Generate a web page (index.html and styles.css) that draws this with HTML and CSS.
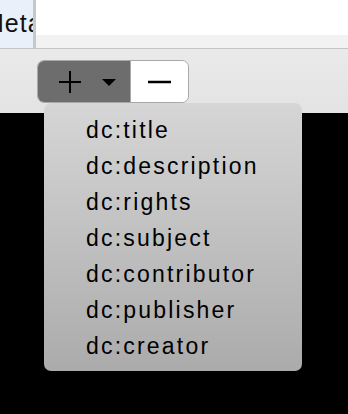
FILE: index.html
```html
<!DOCTYPE html>
<html lang="en">

<head>
    <meta charset="UTF-8" />
    <title>Metadata</title>
    <link rel="stylesheet" href="styles.css">
</head>

<body>

    <!-- table header strip -->
    <div class="table">
        <div class="cell-name"><span class="cell-text">Metadata</span></div>
        <div class="divider"></div>
        <div class="cell-value">
            <div class="value-row"></div>
            <div class="value-band"></div>
        </div>
    </div>

    <!-- toolbar with add / remove -->
    <div class="toolbar">
        <div class="segmented">
            <div class="seg seg-add">
                <svg width="24" height="24" viewBox="0 0 24 24">
                    <path d="M12 1V23M1 12H23" stroke="#000" stroke-width="2" fill="none" />
                </svg>
                <svg class="caret" width="14" height="8" viewBox="0 0 14 8">
                    <path d="M0 0H14L7 7Z" fill="#000" />
                </svg>
            </div>
            <div class="seg seg-remove">
                <svg width="24" height="4" viewBox="0 0 24 4">
                    <path d="M0 2H23" stroke="#000" stroke-width="2.4" fill="none" />
                </svg>
            </div>
        </div>

        <!-- popup menu -->
        <ul class="menu">
            <li>dc:title</li>
            <li>dc:description</li>
            <li>dc:rights</li>
            <li>dc:subject</li>
            <li>dc:contributor</li>
            <li>dc:publisher</li>
            <li>dc:creator</li>
        </ul>
    </div>

</body>

</html>
```

FILE: styles.css
```css
html,
body {
    margin: 0;
    padding: 0;
    background-color: #000;
    font-family: "Liberation Sans", Arial, sans-serif;
    width: 348px;
    height: 414px;
    overflow: hidden;
}

.table {
    display: flex;
    height: 48px;
    border-bottom: 1px solid #c4c4c4;
}

.cell-name {
    width: 33px;
    background-color: #e9f0fa;
    overflow: hidden;
    white-space: nowrap;
}

.cell-text {
    display: inline-block;
    margin-left: -17px;
    margin-top: 9px;
    font-size: 25px;
    letter-spacing: 1px;
    color: #111;
}

.divider {
    width: 3px;
    background-color: #c8c8c8;
}

.cell-value {
    flex: 1;
    display: flex;
    flex-direction: column;
}

.value-row {
    height: 35px;
    background-color: #fff;
}

.value-band {
    flex: 1;
    background-color: #f2f2f2;
}

.toolbar {
    position: relative;
    height: 64px;
    background: linear-gradient(#eaeaea, #e3e3e3);
    padding: 11px 0 0 37px;
    box-sizing: border-box;
}

.segmented {
    display: flex;
    width: 152px;
    height: 43px;
    border: 1px solid #a9a9a9;
    border-radius: 7px;
    overflow: hidden;
    box-sizing: border-box;
}

.seg {
    display: flex;
    align-items: center;
    justify-content: center;
}

.seg-add {
    width: 92px;
    background-color: #6d6d6d;
    gap: 20px;
    padding-left: 6px;
    box-sizing: border-box;
}

.caret {
    margin-top: 2px;
}

.seg-remove {
    flex: 1;
    background-color: #fff;
    border-left: 1px solid #a9a9a9;
}

.menu {
    position: absolute;
    left: 44px;
    top: 54px;
    width: 258px;
    margin: 0;
    padding: 9px 0 7px 0;
    list-style: none;
    border-radius: 7px;
    background: linear-gradient(#d6d6d6, #ababab);
    box-sizing: border-box;
}

.menu li {
    height: 36px;
    line-height: 36px;
    padding-left: 42px;
    font-size: 23px;
    letter-spacing: 2.2px;
    color: #000;
}
```
